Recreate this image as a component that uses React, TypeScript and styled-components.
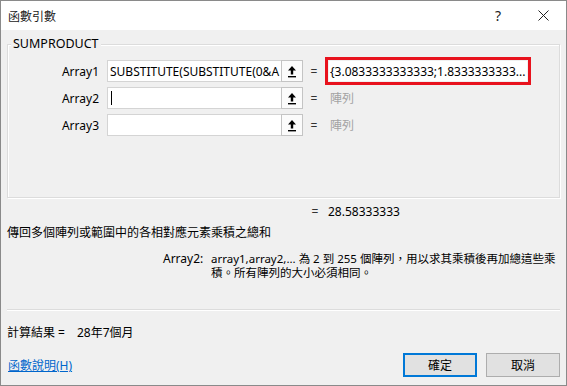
import React from "react";
import styled, { createGlobalStyle } from "styled-components";

interface ArgRow {
  name: string;
  text: string;
  value?: string;
  focused?: boolean;
}

const rows: ArgRow[] = [
  {
    name: "Array1",
    text: "SUBSTITUTE(SUBSTITUTE(0&A",
    value: "{3.0833333333333;1.8333333333...",
  },
  { name: "Array2", text: "", focused: true },
  { name: "Array3", text: "" },
];

const RefButtonIcon = () => (
  <svg width="10" height="13" viewBox="0 0 10 13">
    <path d="M5 1 L9 5.5 L6.2 5.5 L6.2 9.5 L3.8 9.5 L3.8 5.5 L1 5.5 Z" fill="#000" />
    <rect x="1" y="11" width="8" height="1.4" fill="#000" />
  </svg>
);

const App: React.FC = () => {
  return (
    <>
      <GlobalStyle />
      <Window>
        <TitleBar>
          <TitleText>函數引數</TitleText>
          <TitleActions>
            <HelpMark>?</HelpMark>
            <CloseIcon width="11" height="11" viewBox="0 0 11 11">
              <path d="M0.5 0.5 L10.5 10.5 M10.5 0.5 L0.5 10.5" stroke="#222" strokeWidth="1" />
            </CloseIcon>
          </TitleActions>
        </TitleBar>

        <Body>
          <GroupBox>
            <Legend>SUMPRODUCT</Legend>
            {rows.map((row) => (
              <Row key={row.name}>
                <ArgLabel>{row.name}</ArgLabel>
                <ArgInput>
                  {row.focused && <Caret />}
                  {row.text}
                </ArgInput>
                <RefButton>
                  <RefButtonIcon />
                </RefButton>
                <Equals>=</Equals>
                {row.value ? (
                  <ValueBox>{row.value}</ValueBox>
                ) : (
                  <Placeholder>陣列</Placeholder>
                )}
              </Row>
            ))}
          </GroupBox>

          <ResultRow>
            <Equals>=</Equals>
            <span>28.58333333</span>
          </ResultRow>

          <Description>傳回多個陣列或範圍中的各相對應元素乘積之總和</Description>

          <ArgHelp>
            <ArgHelpName>Array2:</ArgHelpName>
            <ArgHelpText>
              <HelpLine>array1,array2,... 為 2 到 255 個陣列，用以求其乘積後再加總這些乘</HelpLine>
              <HelpLine>積。所有陣列的大小必須相同。</HelpLine>
            </ArgHelpText>
          </ArgHelp>

          <Separator />

          <CalcResult>
            <span>計算結果 =</span>
            <CalcValue>28年7個月</CalcValue>
          </CalcResult>

          <Footer>
            <HelpLink href="#">函數說明(H)</HelpLink>
            <ButtonGroup>
              <DialogButton $primary>確定</DialogButton>
              <DialogButton>取消</DialogButton>
            </ButtonGroup>
          </Footer>
        </Body>
      </Window>
    </>
  );
};

export default App;

/** ============================= styled-components ============================= */

const GlobalStyle = createGlobalStyle`
  html, body {
    margin: 0;
    padding: 0;
    background: #ffffff;
  }
  body {
    font-family: "Noto Sans", "Noto Sans CJK TC", sans-serif;
    font-size: 12px;
    color: #000000;
  }
  * {
    box-sizing: border-box;
  }
`;

const Window = styled.div`
  width: 567px;
  height: 386px;
  border: 1px solid #8a8a8a;
  background-color: #f0f0f0;
  display: flex;
  flex-direction: column;
  overflow: hidden;
`;

const TitleBar = styled.div`
  height: 29px;
  background-color: #ffffff;
  display: flex;
  align-items: center;
  justify-content: space-between;
  padding-left: 7px;
`;

const TitleText = styled.span`
  font-size: 12px;
  color: #1a1a1a;
`;

const TitleActions = styled.div`
  display: flex;
  align-items: center;
  height: 100%;
`;

const HelpMark = styled.span`
  font-size: 14px;
  color: #222;
  width: 46px;
  text-align: center;
`;

const CloseIcon = styled.svg`
  margin: 0 17px 0 17px;
`;

const Body = styled.div`
  flex: 1;
  display: flex;
  flex-direction: column;
  padding: 14px 6px 0 6px;
`;

const GroupBox = styled.div`
  position: relative;
  height: 154px;
  border: 1px solid #dcdcdc;
  box-shadow: inset 1px 1px 0 #ffffff, 1px 1px 0 #ffffff;
  padding: 15px 0 0 0;
`;

const Legend = styled.span`
  position: absolute;
  top: -10px;
  left: 3px;
  padding: 0 2px;
  background-color: #f0f0f0;
  font-size: 12.5px;
  line-height: 18px;
`;

const Row = styled.div`
  display: flex;
  align-items: center;
  height: 22px;
  margin-bottom: 5px;
`;

const ArgLabel = styled.span`
  width: 91px;
  text-align: right;
  margin-right: 8px;
`;

const ArgInput = styled.div`
  width: 175px;
  height: 22px;
  background-color: #ffffff;
  border: 1px solid #d4d4d4;
  padding: 0 2px;
  display: flex;
  align-items: center;
  white-space: nowrap;
  overflow: hidden;
`;

const Caret = styled.span`
  width: 1px;
  height: 14px;
  background-color: #000;
  margin-left: 1px;
`;

const RefButton = styled.div`
  width: 22px;
  height: 22px;
  background-color: #fbfbfb;
  border: 1px solid #c4c4c4;
  margin-left: -1px;
  display: flex;
  align-items: center;
  justify-content: center;
`;

const Equals = styled.span`
  width: 22px;
  text-align: center;
  color: #333;
`;

const ValueBox = styled.div`
  margin-left: 4px;
  width: 198px;
  height: 20px;
  background-color: #ffffff;
  padding-left: 1px;
  display: flex;
  align-items: center;
  white-space: nowrap;
  outline: 3px solid #e8121d;
  outline-offset: 1px;
`;

const Placeholder = styled.span`
  margin-left: 5px;
  color: #a3a3a3;
`;

const ResultRow = styled.div`
  display: flex;
  align-items: center;
  height: 20px;
  margin-top: 3px;
  padding-left: 297px;
  gap: 2px;
`;

const Description = styled.div`
  margin-top: 3px;
  line-height: 18px;
`;

const ArgHelp = styled.div`
  display: flex;
  margin-top: 10px;
  padding-left: 156px;
  line-height: 14px;
`;

const ArgHelpName = styled.span`
  flex-shrink: 0;
  width: 48px;
`;

const ArgHelpText = styled.div`
  display: flex;
  flex-direction: column;
  font-size: 11.5px;
`;

const HelpLine = styled.span`
  white-space: nowrap;
  height: 14px;
  line-height: 14px;
`;

const Separator = styled.div`
  margin-top: 29px;
  height: 1px;
  background-color: #dcdcdc;
  box-shadow: 0 1px 0 #ffffff;
`;

const CalcResult = styled.div`
  margin-top: 14px;
  display: flex;
  align-items: center;
  line-height: 18px;
`;

const CalcValue = styled.span`
  margin-left: 12px;
`;

const Footer = styled.div`
  margin-top: 11px;
  display: flex;
  align-items: center;
  justify-content: space-between;
`;

const HelpLink = styled.a`
  color: #0066cc;
  text-decoration: underline;
  margin-left: 1px;
`;

const ButtonGroup = styled.div`
  display: flex;
  gap: 9px;
`;

const DialogButton = styled.button<{ $primary?: boolean }>`
  width: 74px;
  height: 24px;
  font-family: inherit;
  font-size: 12px;
  color: #000;
  background-color: #e1e1e1;
  border: 1px solid ${(p) => (p.$primary ? "#0078d7" : "#adadad")};
  box-shadow: ${(p) => (p.$primary ? "inset 0 0 0 1px #0078d7" : "none")};
  padding: 0;
  cursor: pointer;
`;
